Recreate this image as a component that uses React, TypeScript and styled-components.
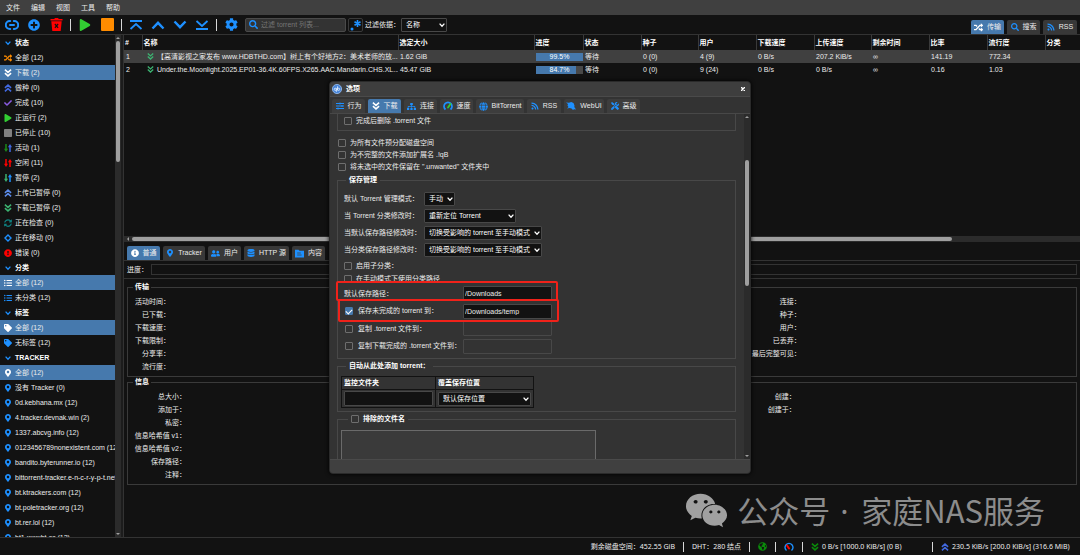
import React from 'react';
import styled, { createGlobalStyle, css } from 'styled-components';
import {
  FaPlusCircle, FaPlay, FaCog, FaSearch, FaRandom, FaCheck,
  FaSyncAlt, FaExclamationCircle, FaListUl, FaTag, FaMapMarkerAlt, FaInfoCircle, FaUserFriends,
  FaDatabase, FaSlidersH, FaSitemap, FaGlobe, FaRss, FaTools,
  FaGlobeAmericas, FaWeixin,
} from 'react-icons/fa';

const c = {
  bg: '#121212',
  panel: '#333333',
  bar: '#404040',
  line: '#333333',
  accent: '#4679ad',
  blue: '#1e90ff',
  green: '#3cb371',
  violet: '#4169e1',
  text: '#ececec',
};

const sans = `"Liberation Sans", "Noto Sans CJK SC", sans-serif`;

const Global = createGlobalStyle`
  * { box-sizing: border-box; }
  html, body, #root { height: 100%; }
  body { margin: 0; background: ${c.bg}; color: ${c.text}; font: 7px/12px ${sans}; overflow: hidden; }
  button, input, select, textarea { font: inherit; color: inherit; margin: 0; }
  svg { display: block; flex: none; }
`;

/* ---------- shell ---------- */

const Shell = styled.div`
  height: 100%;
  display: flex;
  flex-direction: column;
  position: relative;
`;

const MenuBar = styled.nav`
  display: flex;
  gap: 11px;
  height: 15px;
  padding-left: 6px;
  background: ${c.bar};
`;

const MenuItem = styled.button`
  border: 0;
  padding: 0;
  background: none;
  line-height: 15px;
`;

const ToolBar = styled.header`
  display: flex;
  align-items: center;
  height: 20px;
  padding: 0 3px 0 5px;
  border-bottom: 1px solid ${c.line};
`;

const ToolGroup = styled.div<{ $gap: number }>`
  display: flex;
  gap: ${(p) => p.$gap}px;
`;

const IconButton = styled.button`
  display: flex;
  align-items: center;
  justify-content: center;
  width: 14px;
  height: 14px;
  padding: 0;
  border: 0;
  background: none;
  color: ${c.blue};
`;

const Divider = styled.span`
  width: 1px;
  height: 12px;
  margin: 0 7px;
  background: #d8d8d8;
`;

const SearchBox = styled.label`
  display: flex;
  align-items: center;
  gap: 3px;
  width: 101px;
  height: 14px;
  padding-left: 3px;
  border: 1px solid #4a4a4a;
  border-radius: 2px;
  background: ${c.panel};
  color: ${c.blue};
  input {
    flex: 1;
    min-width: 0;
    padding: 0;
    border: 0;
    outline: 0;
    background: none;
    color: ${c.text};
  }
  input::placeholder { color: #757575; }
`;

const RegexButton = styled(IconButton)`
  width: 15px;
  margin: 0 2px;
  border: 1px solid #3a3a3a;
  border-radius: 2px;
`;

const FilterLabel = styled.label`
  display: flex;
  align-items: center;
  width: 36px;
  white-space: nowrap;
`;

const ViewTabs = styled.div`
  display: flex;
  align-self: flex-end;
  gap: 3px;
  margin-left: auto;
`;

const Tab = styled.button<{ $on?: boolean; $w?: number }>`
  display: flex;
  align-items: center;
  justify-content: center;
  gap: 4px;
  width: ${(p) => (p.$w ? `${p.$w}px` : 'auto')};
  height: 14px;
  padding: 0;
  border: 0;
  border-radius: 2px 2px 0 0;
  white-space: nowrap;
  background: ${(p) => (p.$on ? c.accent : '#383838')};
  svg { color: ${(p) => (p.$on ? '#fff' : c.blue)}; }
`;

const DialogTab = styled(Tab)`
  background: ${(p) => (p.$on ? c.accent : '#3d3d3d')};
`;

const Body = styled.div`
  flex: 1;
  min-height: 0;
  display: flex;
`;

/* ---------- sidebar ---------- */

const Sidebar = styled.aside`
  display: flex;
  width: 121px;
  overflow: hidden;
`;

const FilterList = styled.div`
  flex: 1;
  min-width: 0;
  overflow: hidden;
`;

const FilterHead = styled.button`
  display: flex;
  align-items: center;
  gap: 4px;
  width: 100%;
  height: 15px;
  padding: 0 0 0 5px;
  border: 0;
  background: none;
  font-weight: bold;
  color: #fff;
  svg { color: ${c.blue}; }
`;

const FilterRow = styled.button<{ $on?: boolean }>`
  display: flex;
  align-items: center;
  gap: 3px;
  width: 100%;
  height: 15px;
  padding: 0 0 0 4px;
  border: 0;
  white-space: nowrap;
  background: ${(p) => (p.$on ? c.accent : 'none')};
`;

const VTrack = styled.div`
  display: flex;
  flex-direction: column;
  align-items: center;
  justify-content: space-between;
  width: 6px;
  padding: 2px 0;
  background: #2b2b2b;
`;

const VThumb = styled.span<{ $top: number; $h: number }>`
  width: 4px;
  height: ${(p) => p.$h}px;
  margin: ${(p) => p.$top}px 0 auto;
  border-radius: 2px;
  background: #9f9f9f;
`;

const Arrow = styled.span<{ $dir: 'up' | 'down' | 'left' }>`
  border: 2px solid transparent;
  ${(p) => p.$dir === 'up' && css`border-top-width: 0; border-bottom-color: #9f9f9f;`}
  ${(p) => p.$dir === 'down' && css`border-bottom-width: 0; border-top-color: #9f9f9f;`}
  ${(p) => p.$dir === 'left' && css`border-left-width: 0; border-right-color: #9f9f9f;`}
`;

const Splitter = styled.div`
  width: 3px;
  border-right: 1px solid #333;
  background: #1c1c1c;
`;

/* ---------- torrents ---------- */

const Main = styled.main`
  flex: 1;
  min-width: 0;
  display: flex;
  flex-direction: column;
`;

const TorrentArea = styled.section`
  height: 201px;
`;

const TorrentTable = styled.table`
  width: 100%;
  table-layout: fixed;
  border-collapse: collapse;
  th, td {
    padding: 0 0 0 1px;
    text-align: left;
    white-space: nowrap;
    overflow: hidden;
  }
  th {
    height: 15px;
    border-left: 1px solid #3a3a3a;
    color: #fff;
  }
  th:first-child { border-left: 0; }
  td { height: 13px; padding-left: 2px; }
`;

const TorrentRow = styled.tr<{ $hover?: boolean }>`
  background: ${(p) => (p.$hover ? c.bar : 'none')};
`;

const NameCell = styled.div`
  display: flex;
  align-items: center;
  gap: 3px;
  padding-left: 3px;
`;

const Meter = styled.div<{ $pct: number }>`
  width: 47px;
  height: 8px;
  line-height: 8px;
  text-align: center;
  color: #fff;
  background: linear-gradient(to right, ${c.accent} ${(p) => p.$pct}%, #484848 ${(p) => p.$pct}%);
`;

const HTrack = styled.div`
  display: flex;
  align-items: center;
  gap: 3px;
  height: 6px;
  padding-left: 3px;
  background: #2b2b2b;
`;

const HThumb = styled.span`
  width: 86%;
  height: 4px;
  border-radius: 2px;
  background: #9f9f9f;
`;

/* ---------- properties ---------- */

const PropTabs = styled.div`
  display: flex;
  gap: 3px;
  padding: 4px 0 0 3px;
  border-bottom: 1px solid ${c.line};
`;

const ProgressRow = styled.div`
  display: flex;
  align-items: center;
  gap: 3px;
  height: 18px;
  padding: 0 3px;
  border-bottom: 1px solid ${c.line};
`;

const ProgressBox = styled.div`
  flex: 1;
  height: 11px;
  border: 1px solid ${c.line};
`;

const PropPane = styled.div`
  padding: 3px 3px 0;
`;

const PropGroup = styled.fieldset`
  min-width: 0;
  margin: 1px 0 0;
  padding: 4px 0 3px;
  border: 1px solid #3a3a3a;
  legend { margin-left: 5px; padding: 0 2px; line-height: 8px; font-weight: bold; color: #fff; }
`;

const PropGrid = styled.div<{ $cols: string; $rows: number }>`
  display: grid;
  grid-template-columns: ${(p) => p.$cols};
  grid-template-rows: repeat(${(p) => p.$rows}, 13px);
  grid-auto-flow: column;
  line-height: 13px;
  text-align: right;
  white-space: nowrap;
`;

const PropLabel = styled.span<{ $col: number; $row: number }>`
  grid-column: ${(p) => p.$col};
  grid-row: ${(p) => p.$row};
`;

const StatusBar = styled.footer`
  display: flex;
  align-items: center;
  justify-content: flex-end;
  height: 18px;
  padding-right: 5px;
  border-top: 1px solid ${c.line};
  font-family: "Noto Sans", "Noto Sans CJK SC", sans-serif;
  white-space: nowrap;
`;

const StatusItem = styled.span<{ $w?: number }>`
  display: flex;
  align-items: center;
  gap: 3px;
  width: ${(p) => (p.$w ? `${p.$w}px` : 'auto')};
`;

const StatusDivider = styled(Divider)`
  margin: 0 8px;
  height: 10px;
`;

const Watermark = styled.div`
  position: absolute;
  right: 35px;
  bottom: 22px;
  display: flex;
  align-items: center;
  gap: 9px;
  font: 31px/46px "Noto Sans CJK SC", sans-serif;
  color: #8c8c8c;
  white-space: nowrap;
  svg { color: #a0a0a0; }
`;

const Dot = styled.span`
  display: inline-block;
  width: 17px;
  padding-left: 3px;
  font-family: "Noto Sans", sans-serif;
  line-height: 1;
`;

/* ---------- options dialog ---------- */

const Dialog = styled.section`
  position: absolute;
  top: 81px;
  left: 50%;
  width: 422px;
  height: 393px;
  margin-left: -211px;
  display: flex;
  flex-direction: column;
  border: 1px solid #2a2a2a;
  border-radius: 4px;
  overflow: hidden;
  background: ${c.panel};
  box-shadow: 0 0 4px #000;
`;

const DialogTitle = styled.header`
  display: flex;
  align-items: center;
  gap: 4px;
  height: 15px;
  padding: 0 5px 0 2px;
  border-bottom: 1px solid #4a4a4a;
  background: #3e3e3e;
  color: #fff;
  h2 { margin: 0; font-size: 7px; }
`;

const CloseButton = styled.button`
  margin-left: auto;
  padding: 0;
  border: 0;
  background: none;
  color: #fff;
`;

const DialogTabs = styled.div`
  display: flex;
  gap: 3px;
  padding: 2px 0 0 2px;
  border-bottom: 1px solid #484848;
`;

const DialogBody = styled.div`
  flex: 1;
  min-height: 0;
  display: flex;
`;

const Form = styled.div`
  flex: 1;
  min-width: 0;
  padding: 0 8px 0 7px;
  overflow: hidden;
`;

const DialogFoot = styled.footer`
  height: 14px;
  border-top: 1px solid #4a4a4a;
  background: ${c.bar};
`;

const ClippedGroup = styled.div`
  height: 17px;
  margin-bottom: 6px;
  padding: 1px 6px;
  border: 1px solid #484848;
  border-top: 0;
`;

const LooseChecks = styled.div`
  padding-left: 1px;
`;

const Group = styled.fieldset<{ $pad?: number; $legend?: number }>`
  min-width: 0;
  margin: 1px 0 0;
  padding: 4px ${(p) => p.$pad ?? 6}px 3px;
  border: 1px solid #484848;
  legend { margin-left: ${(p) => p.$legend ?? 2}px; padding: 0 3px; font-weight: bold; color: #fff; }
`;

const CheckRow = styled.div<{ $h?: number }>`
  display: flex;
  align-items: center;
  height: ${(p) => p.$h ?? 12}px;
  label { padding-left: 4px; }
`;

const SubChecks = styled.div`
  padding-top: 1px;
`;

const Check = styled.input.attrs({ type: 'checkbox' })`
  appearance: none;
  flex: none;
  display: grid;
  place-items: center;
  width: 8px;
  height: 8px;
  border: 1px solid #6e6e6e;
  border-radius: 1px;
  &:checked { border-color: ${c.accent}; background: ${c.accent}; }
  &:checked::after {
    content: '';
    width: 3px;
    height: 5px;
    margin-bottom: 1px;
    border: solid #fff;
    border-width: 0 1px 1px 0;
    transform: rotate(45deg);
  }
`;

const Field = styled.div<{ $h?: number; $solid?: boolean; $indent?: boolean }>`
  position: relative;
  display: flex;
  align-items: center;
  height: ${(p) => p.$h ?? 17}px;
  padding-left: ${(p) => (p.$indent ? 1 : 0)}px;
  background: ${(p) => (p.$solid ? c.panel : 'none')};
  white-space: nowrap;
`;

const FieldLabel = styled.label<{ $w: number; $indent?: number }>`
  width: ${(p) => p.$w}px;
  padding-left: ${(p) => p.$indent ?? 0}px;
`;

const TextInput = styled.input<{ $w: number }>`
  width: ${(p) => p.$w}px;
  height: 15px;
  padding: 0 1px;
  border: 1px solid #484848;
  border-radius: 1px;
  background: ${c.bg};
  &:disabled { background: ${c.panel}; }
`;

const Highlight = styled.span<{ $left: number; $top: number; $w: number; $h: number }>`
  position: absolute;
  z-index: 1;
  left: ${(p) => p.$left}px;
  top: ${(p) => p.$top}px;
  width: ${(p) => p.$w}px;
  height: ${(p) => p.$h}px;
  border: 2px solid #f0221a;
  border-radius: 2px;
  pointer-events: none;
`;

const SelectWrap = styled.span<{ $w: number }>`
  position: relative;
  display: block;
  width: ${(p) => p.$w}px;
  height: 14px;
  select {
    appearance: none;
    width: 100%;
    height: 100%;
    padding: 0 0 0 4px;
    border: 1px solid #484848;
    border-radius: 1px;
    background: ${c.bg};
    color: #fff;
  }
  svg { position: absolute; right: 2px; top: 4px; pointer-events: none; }
`;

const WatchTable = styled.table`
  border-collapse: collapse;
  th, td { padding: 0 2px; border: 1px solid ${c.bg}; text-align: left; }
  th { height: 13px; color: #fff; }
  td { height: 18px; }
`;

const Excluded = styled.textarea`
  display: block;
  width: 255px;
  height: 60px;
  margin-top: 1px;
  border: 1px solid #6a6a6a;
  background: #3a3a3a;
  resize: none;
`;

/* ---------- drawings ---------- */

const stroke = { fill: 'none', stroke: 'currentColor', strokeWidth: 2, strokeLinecap: 'round', strokeLinejoin: 'round' } as const;

const LinkIcon = () => (
  <svg width="14" height="12" viewBox="0 0 14 12" {...stroke}>
    <path d="M5.2 2H4.8a4 4 0 0 0 0 8h.4M8.800 2h.4a4 4 0 0 1 0 8h-.4M5 6h4" />
  </svg>
);
const TrashIcon = () => (
  <svg width="13" height="13" viewBox="0 0 13 13">
    <path fill="#f00" d="M.5 1h3.700l.8-1h3l.8 1h3.700v1.600H.5zM1.300 3.300h10.400l-1 9.700H2.300z" />
    <path d="M4.900 6l3.200 3.800M8.100 6L4.900 9.800" stroke={c.bg} strokeWidth="1.200" />
  </svg>
);
const StopIcon = ({ size, color }: { size: number; color: string }) => (
  <svg width={size} height={size} viewBox="0 0 12 12"><rect width="12" height="12" rx="1" fill={color} /></svg>
);
const MoveIcon = ({ up, edge }: { up?: boolean; edge?: boolean }) => (
  <svg width="14" height="12" viewBox="0 0 14 12" {...stroke} strokeLinecap="butt" strokeLinejoin="miter">
    <g transform={up ? undefined : 'matrix(1 0 0 -1 0 12)'}>
      {edge ? <path d="M1 2h12M1.500 10L7 5l5.500 5" strokeWidth="1.800" /> : <path d="M1.500 9.500L7 3.800l5.500 5.700" strokeWidth="2.400" />}
    </g>
  </svg>
);
const RegexIcon = () => (
  <svg width="12" height="12" viewBox="0 0 12 12">
    <circle cx="2" cy="10" r="1.500" fill="currentColor" />
    <path d="M7.500 1v7M4.500 2.800l6 3.400M10.500 2.800l-6 3.400" stroke="currentColor" strokeWidth="1.600" />
  </svg>
);
const Chevron = ({ color = 'currentColor', size = 6 }: { color?: string; size?: number }) => (
  <svg width={size} height={size} viewBox="0 0 6 6" fill="none" stroke={color} strokeWidth="1.300"><path d="M.6 1.600L3 4.200l2.400-2.600" /></svg>
);
const Double = ({ up, color = 'currentColor', size = 8 }: { up?: boolean; color?: string; size?: number }) => (
  <svg width={size} height={size} viewBox="0 0 8 8" fill="none" stroke={color} strokeWidth="1.500">
    <path d={up ? 'M.9 3.900L4 1.100l3.100 2.800M.9 7.400L4 4.600l3.100 2.800' : 'M.9.600L4 3.400 7.100.600M.9 4.100L4 6.900l3.100-2.800'} />
  </svg>
);
const Transfer = ({ a, b }: { a: string; b: string }) => (
  <svg width="8" height="8" viewBox="0 0 8 8">
    <path d="M2 0v6" stroke={a} strokeWidth="1.500" /><path d="M0 4.800h4L2 8z" fill={a} />
    <path d="M6 2v6" stroke={b} strokeWidth="1.500" /><path d="M4 3.200h4L6 0z" fill={b} />
  </svg>
);
const Diamond = () => (
  <svg width="8" height="8" viewBox="0 0 8 8" fill="none" stroke={c.blue} strokeWidth="1.400"><path d="M4 1l3 3-3 3-3-3z" /></svg>
);
const Gauge = () => (
  <svg width="10" height="10" viewBox="0 0 10 10" fill="none">
    <path d="M2.500 8.500a4 4 0 1 1 5 0" stroke={c.blue} strokeWidth="1.700" />
    <path d="M5 6.500L7.500 3" stroke="#32cd32" strokeWidth="1.800" strokeLinecap="round" />
  </svg>
);
const LimitGauge = () => (
  <svg width="10" height="10" viewBox="0 0 10 10" fill="none">
    <path d="M2.500 8.500a4 4 0 1 1 5 0" stroke={c.blue} strokeWidth="1.400" />
    <path d="M5 6.500L3 3.500" stroke="#f00" strokeWidth="2" strokeLinecap="round" />
  </svg>
);
const PlaneIcon = () => (
  <svg width="10" height="8" viewBox="0 0 10 8" fill={c.blue}>
    <path d="M0 .5l3 .2L5.200 0l2.300 1 1 2.500L8.300 5 10 7.500 8 7.200 7 8 5.500 6.500 3.500 6 1 6.500 2.500 5 1.500 3.500 2 2z" />
  </svg>
);
const ContentIcon = () => (
  <svg width="9" height="9" viewBox="0 0 9 9">
    <path fill="currentColor" d="M0 .8h3.500l1 1H9v6.700H0z" />
    <path d="M2.200 4h3.600M2.200 6h4.400" stroke={c.bar} strokeWidth=".8" />
  </svg>
);
const Logo = () => (
  <svg width="10" height="10" viewBox="0 0 10 10">
    <circle cx="5" cy="5" r="4.600" fill="#4a86d8" stroke="#9cc3f5" strokeWidth=".8" />
    <g fill="none" stroke="#e8f2ff" strokeWidth=".8"><circle cx="3.300" cy="5.300" r="1.100" /><path d="M4.400 4.200v3.600M5.500 2.300v4" /><circle cx="6.600" cy="5.300" r="1.100" /></g>
  </svg>
);

/* ---------- data ---------- */

const pin = <FaMapMarkerAlt size={8} color={c.blue} />;

type Filter = { icon: React.ReactNode; text: string; on?: boolean };
const filters: { title: string; rows: Filter[] }[] = [
  {
    title: '状态',
    rows: [
      { icon: <FaRandom size={8} color="#ff8c00" />, text: '全部 (12)' },
      { icon: <Double color="#fff" />, text: '下载 (2)', on: true },
      { icon: <Double up color={c.violet} />, text: '做种 (0)' },
      { icon: <FaCheck size={8} color="#8a5be0" />, text: '完成 (10)' },
      { icon: <FaPlay size={8} color="#32cd32" />, text: '正运行 (2)' },
      { icon: <StopIcon size={8} color="#808080" />, text: '已停止 (10)' },
      { icon: <Transfer a="#1a8a1a" b={c.violet} />, text: '活动 (1)' },
      { icon: <Transfer a="#f00" b="#f00" />, text: '空闲 (11)' },
      { icon: <Transfer a={c.green} b={c.blue} />, text: '暂停 (2)' },
      { icon: <Double up color="#5b8be8" />, text: '上传已暂停 (0)' },
      { icon: <Double color={c.green} />, text: '下载已暂停 (2)' },
      { icon: <FaSyncAlt size={8} color="#0f8080" />, text: '正在检查 (0)' },
      { icon: <Diamond />, text: '正在移动 (0)' },
      { icon: <FaExclamationCircle size={8} color="#f00" />, text: '错误 (0)' },
    ],
  },
  {
    title: '分类',
    rows: [
      { icon: <FaListUl size={8} color="#fff" />, text: '全部 (12)', on: true },
      { icon: <FaListUl size={8} color={c.blue} />, text: '未分类 (12)' },
    ],
  },
  {
    title: '标签',
    rows: [
      { icon: <FaTag size={8} color="#fff" />, text: '全部 (12)', on: true },
      { icon: <FaTag size={8} color={c.blue} />, text: '无标签 (12)' },
    ],
  },
  {
    title: 'TRACKER',
    rows: [
      { icon: <FaMapMarkerAlt size={8} color="#fff" />, text: '全部 (12)', on: true },
      ...[
        '没有 Tracker (0)', '0d.kebhana.mx (12)', '4.tracker.devnak.win (2)', '1337.abcvg.info (12)',
        '0123456789nonexistent.com (12)', 'bandito.byterunner.io (12)', 'bittorrent-tracker.e-n-c-r-y-p-t.net (12)',
        'bt.ktrackers.com (12)', 'bt.poletracker.org (12)', 'bt.rer.lol (12)', 'bt1.xxxxbt.cc (12)',
      ].map((text) => ({ icon: pin, text })),
    ],
  },
];

const columns: [string, number | undefined][] = [
  ['#', 18], ['名称', 256], ['选定大小', 136], ['进度', 49], ['状态', 58], ['种子', 57], ['用户', 58],
  ['下载速度', 58], ['上传速度', 57], ['剩余时间', 58], ['比率', 58], ['流行度', 58], ['分类', undefined],
];

const torrents = [
  { name: '【高清影视之家发布 www.HDBTHD.com】树上有个好地方2：美术老师的放...', size: '1.62 GiB', pct: 99.5, rest: ['等待', '0 (0)', '4 (9)', '0 B/s', '207.2 KiB/s', '∞', '141.19', '772.34', ''] },
  { name: 'Under.the.Moonlight.2025.EP01-36.4K.60FPS.X265.AAC.Mandarin.CHS.XL...', size: '45.47 GiB', pct: 84.7, rest: ['等待', '0 (0)', '9 (24)', '0 B/s', '0 B/s', '∞', '0.16', '1.03', ''] },
];

const transferLabels = [
  { col: 1, names: ['活动时间：', '已下载：', '下载速度：', '下载限制：', '分享率：', '流行度：'] },
  { col: 5, names: ['连接：', '种子：', '用户：', '已丢弃：', '最后完整可见：'] },
];
const infoLabels = [
  { col: 1, names: ['总大小：', '添加于：', '私密：', '信息哈希值 v1：', '信息哈希值 v2：', '保存路径：', '注释：'] },
  { col: 5, names: ['创建：', '创建于：'] },
];

const modes = [
  { id: 'tmm', label: '默认 Torrent 管理模式：', value: '手动', w: 31 },
  { id: 'cat', label: '当 Torrent 分类修改时：', value: '重新定位 Torrent', w: 92 },
  { id: 'def', label: '当默认保存路径修改时：', value: '切换受影响的 torrent 至手动模式', w: 118 },
  { id: 'cps', label: '当分类保存路径修改时：', value: '切换受影响的 torrent 至手动模式', w: 118 },
];

/* ---------- components ---------- */

const Select = ({ id, value, w, label }: { id: string; value: string; w: number; label?: string }) => (
  <SelectWrap $w={w}>
    <select id={id} aria-label={label}><option>{value}</option></select>
    <Chevron color="#fff" />
  </SelectWrap>
);

const Labels = ({ groups }: { groups: typeof infoLabels }) => (
  <>{groups.flatMap((g) => g.names.map((n, i) => <PropLabel key={n} $col={g.col} $row={i + 1}>{n}</PropLabel>))}</>
);

const CheckLine = ({ id, text, h }: { id: string; text: string; h?: number }) => (
  <CheckRow $h={h}><Check id={id} /><label htmlFor={id}>{text}</label></CheckRow>
);

const Options = () => (
  <Dialog role="dialog" aria-label="选项">
    <DialogTitle>
      <Logo /><h2>选项</h2>
      <CloseButton aria-label="关闭">
        <svg width="4" height="4" viewBox="0 0 4 4" stroke="currentColor" strokeWidth="1.400"><path d="M0 0l4 4M4 0L0 4" /></svg>
      </CloseButton>
    </DialogTitle>
    <DialogTabs>
      <DialogTab $w={33}><FaSlidersH size={8} />行为</DialogTab>
      <DialogTab $on $w={33}><Double />下载</DialogTab>
      <DialogTab $w={33}><FaSitemap size={9} />连接</DialogTab>
      <DialogTab $w={33}><Gauge />速度</DialogTab>
      <DialogTab $w={48}><FaGlobe size={9} />BitTorrent</DialogTab>
      <DialogTab $w={34}><FaRss size={8} />RSS</DialogTab>
      <DialogTab $w={40}><PlaneIcon />WebUI</DialogTab>
      <DialogTab $w={33}><FaTools size={8} />高级</DialogTab>
    </DialogTabs>
    <DialogBody>
      <Form>
        <ClippedGroup><CheckLine id="del" text="完成后删除 .torrent 文件" /></ClippedGroup>
        <LooseChecks>
          <CheckLine id="pre" text="为所有文件预分配磁盘空间" />
          <CheckLine id="ext" text="为不完整的文件添加扩展名 .!qB" />
          <CheckLine id="unw" text={'将未选中的文件保留在 ".unwanted" 文件夹中'} />
        </LooseChecks>
        <Group>
          <legend>保存管理</legend>
          {modes.map((m) => (
            <Field key={m.id}>
              <FieldLabel $w={80} htmlFor={m.id}>{m.label}</FieldLabel>
              <Select id={m.id} value={m.value} w={m.w} />
            </Field>
          ))}
          <SubChecks>
            <CheckLine h={13} id="sub" text="启用子分类：" />
            <CheckLine h={13} id="man" text="在手动模式下使用分类路径" />
          </SubChecks>
          <Field $solid>
            <FieldLabel $w={119} htmlFor="path">默认保存路径：</FieldLabel>
            <TextInput id="path" $w={89} defaultValue="/Downloads" />
            <Highlight $left={-8} $top={-4} $w={222} $h={20} />
          </Field>
          <Field $h={18} $indent>
            <Check id="tmp" defaultChecked />
            <FieldLabel $w={110} $indent={5} htmlFor="tmp">保存未完成的 torrent 到：</FieldLabel>
            <TextInput $w={89} aria-label="保存未完成的 torrent 到" defaultValue="/Downloads/temp" />
            <Highlight $left={-6} $top={-3} $w={221} $h={23} />
          </Field>
          <Field $indent>
            <Check id="cpy" />
            <FieldLabel $w={110} $indent={5} htmlFor="cpy">复制 .torrent 文件到：</FieldLabel>
            <TextInput $w={89} aria-label="复制 .torrent 文件到" disabled />
          </Field>
          <Field $h={18} $indent>
            <Check id="fin" />
            <FieldLabel $w={110} $indent={5} htmlFor="fin">复制下载完成的 .torrent 文件到：</FieldLabel>
            <TextInput $w={89} aria-label="复制下载完成的 .torrent 文件到" disabled />
          </Field>
        </Group>
        <Group $pad={3} $legend={5}>
          <legend>自动从此处添加 torrent：</legend>
          <WatchTable>
            <thead><tr><th>监控文件夹</th><th>覆盖保存位置</th></tr></thead>
            <tbody><tr>
              <td><TextInput $w={89} aria-label="监控文件夹" /></td>
              <td><Select id="ovr" label="覆盖保存位置" value="默认保存位置" w={93} /></td>
            </tr></tbody>
          </WatchTable>
        </Group>
        <Group $pad={3} $legend={7}>
          <legend><CheckLine id="exc" text="排除的文件名" /></legend>
          <Excluded aria-label="排除的文件名" />
        </Group>
      </Form>
      <VTrack><Arrow $dir="up" /><VThumb $top={42} $h={126} /><Arrow $dir="down" /></VTrack>
    </DialogBody>
    <DialogFoot />
  </Dialog>
);

export default function App() {
  return (
    <Shell>
      <Global />
      <MenuBar>{['文件', '编辑', '视图', '工具', '帮助'].map((m) => <MenuItem key={m}>{m}</MenuItem>)}</MenuBar>
      <ToolBar>
        <ToolGroup $gap={8}>
          <IconButton aria-label="添加链接"><LinkIcon /></IconButton>
          <IconButton aria-label="添加文件"><FaPlusCircle size={12} /></IconButton>
          <IconButton aria-label="删除"><TrashIcon /></IconButton>
        </ToolGroup>
        <Divider />
        <ToolGroup $gap={8}>
          <IconButton aria-label="启动"><FaPlay size={12} color="#32cd32" /></IconButton>
          <IconButton aria-label="停止"><StopIcon size={13} color="#ff8c00" /></IconButton>
        </ToolGroup>
        <Divider />
        <ToolGroup $gap={8}>
          <IconButton aria-label="置顶"><MoveIcon up edge /></IconButton>
          <IconButton aria-label="上移"><MoveIcon up /></IconButton>
          <IconButton aria-label="下移"><MoveIcon /></IconButton>
          <IconButton aria-label="置底"><MoveIcon edge /></IconButton>
        </ToolGroup>
        <Divider />
        <ToolGroup $gap={7}>
          <IconButton aria-label="设置"><FaCog size={13} /></IconButton>
          <SearchBox><FaSearch size={9} /><input aria-label="过滤" placeholder="过滤 torrent 列表..." /></SearchBox>
        </ToolGroup>
        <RegexButton aria-label="正则表达式"><RegexIcon /></RegexButton>
        <FilterLabel htmlFor="by">过滤依据：</FilterLabel>
        <Select id="by" value="名称" w={46} />
        <ViewTabs>
          <Tab $on $w={33}><FaRandom size={9} />传输</Tab>
          <Tab $w={33}><FaSearch size={8} />搜索</Tab>
          <Tab $w={34}><FaRss size={8} />RSS</Tab>
        </ViewTabs>
      </ToolBar>
      <Body>
        <Sidebar>
          <FilterList>
            {filters.map((f) => (
              <React.Fragment key={f.title}>
                <FilterHead><Chevron />{f.title}</FilterHead>
                {f.rows.map((r) => <FilterRow key={r.text} $on={r.on}>{r.icon}{r.text}</FilterRow>)}
              </React.Fragment>
            ))}
          </FilterList>
          <VTrack><Arrow $dir="up" /><VThumb $top={2} $h={121} /><Arrow $dir="down" /></VTrack>
        </Sidebar>
        <Splitter />
        <Main>
          <TorrentArea>
            <TorrentTable>
              <colgroup>{columns.map(([n, w]) => <col key={n} width={w} />)}</colgroup>
              <thead><tr>{columns.map(([n]) => <th key={n}>{n}</th>)}</tr></thead>
              <tbody>
                {torrents.map((t, i) => (
                  <TorrentRow key={t.size} $hover={i === 0}>
                    <td>{i + 1}</td>
                    <td><NameCell><Double size={7} color={c.green} />{t.name}</NameCell></td>
                    <td>{t.size}</td>
                    <td><Meter $pct={t.pct}>{t.pct}%</Meter></td>
                    {t.rest.map((v, k) => <td key={k}>{v}</td>)}
                  </TorrentRow>
                ))}
              </tbody>
            </TorrentTable>
          </TorrentArea>
          <HTrack><Arrow $dir="left" /><HThumb /></HTrack>
          <PropTabs>
            <Tab $on $w={33}><FaInfoCircle size={8} />普通</Tab>
            <Tab $w={42}><FaMapMarkerAlt size={8} />Tracker</Tab>
            <Tab $w={33}><FaUserFriends size={9} />用户</Tab>
            <Tab $w={45}><FaDatabase size={8} />HTTP 源</Tab>
            <Tab $w={33}><ContentIcon />内容</Tab>
          </PropTabs>
          <ProgressRow>进度：<ProgressBox /></ProgressRow>
          <PropPane>
            <PropGroup>
              <legend>传输</legend>
              <PropGrid $cols="42px 1fr 31px 1fr 49px 1fr" $rows={6}><Labels groups={transferLabels} /></PropGrid>
            </PropGroup>
            <PropGroup>
              <legend>信息</legend>
              <PropGrid $cols="58px 1fr 21px 1fr 28px 1fr" $rows={7}><Labels groups={infoLabels} /></PropGrid>
            </PropGroup>
          </PropPane>
        </Main>
      </Body>
      <StatusBar>
        <StatusItem>剩余磁盘空间：452.55 GiB</StatusItem>
        <StatusDivider />
        <StatusItem>DHT：280 结点</StatusItem>
        <StatusDivider />
        <StatusItem><FaGlobeAmericas size={9} color="#0a8a0a" /></StatusItem>
        <StatusDivider />
        <StatusItem><LimitGauge /></StatusItem>
        <StatusDivider />
        <StatusItem $w={113}><Double color="#0a8a0a" />0 B/s [1000.0 KiB/s] (0 B)</StatusItem>
        <StatusDivider />
        <StatusItem $w={134}><Double up color={c.violet} />230.5 KiB/s [200.0 KiB/s] (316.6 MiB)</StatusItem>
      </StatusBar>
      <Watermark><FaWeixin size={43} /><span>公众号 <Dot>·</Dot> 家庭NAS服务</span></Watermark>
      <Options />
    </Shell>
  );
}
